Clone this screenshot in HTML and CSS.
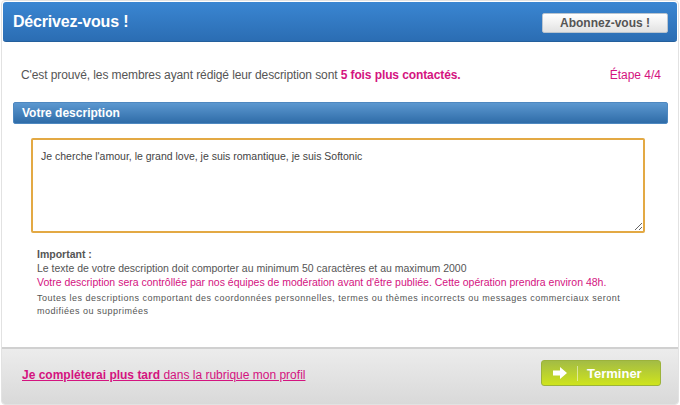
FILE: index.html
```html
<!DOCTYPE html>
<html lang="fr">
<head>
    <meta charset="UTF-8">
    <title>Décrivez-vous !</title>
    <link rel="stylesheet" href="styles.css">
</head>
<body>
    <div class="dialog">
        <div class="dialog-header">
            <h1>Décrivez-vous !</h1>
            <button class="subscribe">Abonnez-vous !</button>
        </div>

        <div class="dialog-body">
            <div class="intro">
                <p>C'est prouvé, les membres ayant rédigé leur description sont <strong>5 fois plus contactés.</strong></p>
                <span class="step">Étape 4/4</span>
            </div>

            <div class="section-title">Votre description</div>

            <div class="field">
                <textarea>Je cherche l'amour, le grand love, je suis romantique, je suis Softonic</textarea>
            </div>

            <div class="notes">
                <p class="notes-title">Important :</p>
                <p>Le texte de votre description doit comporter au minimum 50 caractères et au maximum 2000</p>
                <p class="pink">Votre description sera contrôllée par nos équipes de modération avant d'être publiée. Cette opération prendra environ 48h.</p>
                <p class="small">Toutes les descriptions comportant des coordonnées personnelles, termes ou thèmes incorrects ou messages commerciaux seront modifiées ou supprimées</p>
            </div>
        </div>

        <div class="dialog-footer">
            <a href="#" class="later"><strong>Je compléterai plus tard</strong> dans la rubrique mon profil</a>
            <button class="finish">
                <svg width="16" height="14" viewBox="0 0 16 14">
                    <path d="M1 4.5h7V1l7 6-7 6V9.5H1z" fill="#fff"/>
                </svg>
                <span class="sep"></span>
                Terminer
            </button>
        </div>
    </div>
</body>
</html>
```

FILE: styles.css
```css
body {
    margin: 0;
    background: #fff;
    font-family: "Liberation Sans", Arial, sans-serif;
}

.dialog {
    width: 676px;
    height: 403px;
    margin-left: 1px;
    border: 1px solid #e2e2e2;
    border-radius: 4px;
    display: flex;
    flex-direction: column;
    overflow: hidden;
}

.dialog-header {
    margin: 1px 1px 0 1px;
    height: 39px;
    border-radius: 3px;
    background: linear-gradient(#3a86d2, #2b6db3);
    border-bottom: 1px solid #245f9c;
    display: flex;
    align-items: center;
    justify-content: space-between;
    padding: 0 9px 0 10px;
}

.dialog-header h1 {
    margin: 0;
    color: #fff;
    font-size: 16px;
    letter-spacing: -0.2px;
    font-weight: bold;
}

.subscribe {
    width: 126px;
    height: 20px;
    margin-top: 2px;
    border: 1px solid #b9c4cf;
    border-radius: 2px;
    background: linear-gradient(#ffffff, #e2e2e2);
    color: #555;
    font-family: "Liberation Sans", Arial, sans-serif;
    font-size: 12px;
    font-weight: bold;
    padding: 0;
}

.dialog-body {
    flex: 1;
    padding: 0 10px 0 11px;
}

.intro {
    display: flex;
    justify-content: space-between;
    align-items: baseline;
    padding: 26px 7px 0 8px;
    height: 34px;
}

.intro p {
    margin: 0;
    font-size: 12px;
    letter-spacing: -0.1px;
    color: #555;
}

.intro strong,
.step {
    color: #d4137f;
}

.step {
    font-size: 12px;
}

.section-title {
    height: 20px;
    line-height: 20px;
    border-radius: 2px;
    background: linear-gradient(#5c98d0, #2f6ca8);
    border: 1px solid #4e88c0;
    color: #fff;
    font-size: 12px;
    font-weight: bold;
    padding-left: 8px;
}

.field {
    padding: 14px 23px 0 18px;
}

textarea {
    display: block;
    width: 100%;
    height: 95px;
    box-sizing: border-box;
    border: 2px solid #e3a944;
    border-radius: 2px;
    padding: 10px 8px;
    font-family: "Liberation Sans", Arial, sans-serif;
    font-size: 10.5px;
    color: #444;
    resize: vertical;
    outline: none;
}

.notes {
    padding: 14px 20px 0 24px;
    font-size: 10.5px;
    color: #555;
}

.notes p {
    margin: 0;
    line-height: 14px;
}

.notes .notes-title {
    font-weight: bold;
}

.notes .pink {
    color: #d4137f;
}

.notes .small {
    margin-top: 3px;
    font-size: 9px;
    letter-spacing: 0.5px;
    line-height: 13px;
    color: #555;
    padding-right: 20px;
}

.dialog-footer {
    height: 55px;
    border-top: 2px solid #d0d0d0;
    background: linear-gradient(#ececec, #d9d9d9);
    display: flex;
    align-items: center;
    justify-content: space-between;
    padding: 0 17px 0 20px;
}

.later {
    color: #d4137f;
    font-size: 12px;
    margin-bottom: 3px;
}

.finish {
    display: flex;
    align-items: center;
    width: 120px;
    height: 26px;
    border: 1px solid #9cb33a;
    border-radius: 3px;
    background: linear-gradient(#a3bc45, #cfe41c);
    color: #fff;
    font-family: "Liberation Sans", Arial, sans-serif;
    font-size: 13px;
    font-weight: bold;
    padding: 0 0 0 10px;
    margin-bottom: 7px;
}

.finish .sep {
    width: 1px;
    height: 15px;
    background: rgba(255, 255, 255, 0.5);
    margin: 0 9px 0 9px;
}
```
